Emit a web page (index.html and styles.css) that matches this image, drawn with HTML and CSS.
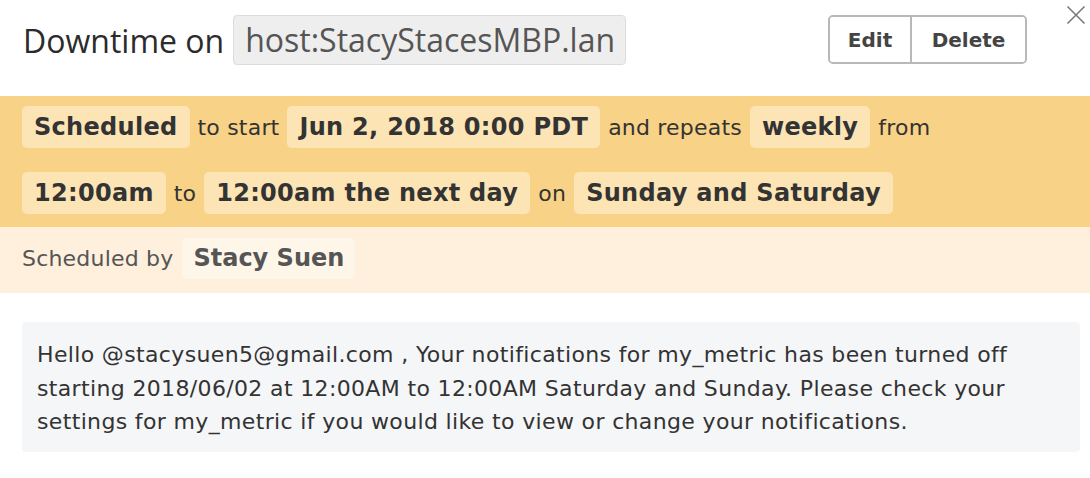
FILE: index.html
```html
<!DOCTYPE html>
<html>
<head>
<meta charset="utf-8">
<link rel="stylesheet" href="styles.css">
</head>
<body>
<div class="modal">
  <div class="header">
    <div class="title">
      <span class="title-text">Downtime on</span>
      <span class="host">host:StacyStacesMBP.lan</span>
    </div>
    <div class="btn-group">
      <button class="btn btn-edit">Edit</button>
      <button class="btn btn-delete">Delete</button>
    </div>
  </div>
  <button class="close" aria-label="Close">
    <svg width="20" height="20" viewBox="0 0 20 20"><path d="M1.5 1.5 L18.5 18.5 M18.5 1.5 L1.5 18.5" stroke="#7a7a7a" stroke-width="1.6" fill="none"/></svg>
  </button>
  <div class="schedule">
    <div class="row">
      <span class="pill">Scheduled</span><span class="word">to start</span><span class="pill">Jun 2, 2018 0:00 PDT</span><span class="word">and repeats</span><span class="pill">weekly</span><span class="word">from</span>
    </div>
    <div class="row">
      <span class="pill">12:00am</span><span class="word">to</span><span class="pill">12:00am the next day</span><span class="word">on</span><span class="pill">Sunday and Saturday</span>
    </div>
  </div>
  <div class="byline">
    <span class="by-label">Scheduled by</span><span class="pill pill-light">Stacy Suen</span>
  </div>
  <div class="message">Hello @stacysuen5@gmail.com , Your notifications for my_metric has been turned off starting 2018/06/02 at 12:00AM to 12:00AM Saturday and Sunday. Please check your settings for my_metric if you would like to view or change your notifications.</div>
</div>
</body>
</html>
```

FILE: styles.css
```css
* { box-sizing: border-box; }
html, body { margin: 0; padding: 0; background: #fff; }
body {
  width: 1090px;
  height: 478px;
  overflow: hidden;
  font-family: "DejaVu Sans", Verdana, sans-serif;
  color: #333;
}
.modal { position: relative; }
.header {
  height: 96px;
  display: flex;
  justify-content: space-between;
  align-items: flex-start;
  padding: 15px 63px 0 23px;
}
.title {
  display: flex;
  align-items: center;
  gap: 9px;
  font-family: "Open Sans", sans-serif;
  font-size: 32px;
}
.title-text { color: #2b2b2b; }
.host {
  display: inline-block;
  height: 50px;
  line-height: 48px;
  padding: 0 10px 0 11px;
  background: #eeeeee;
  border: 1px solid #dcdcdc;
  border-radius: 4px;
  color: #555;
}
.btn-group {
  display: flex;
  height: 49px;
  border: 2px solid #b8b8b8;
  border-radius: 5px;
  overflow: hidden;
}
.btn {
  font-family: "DejaVu Sans", sans-serif;
  font-weight: bold;
  font-size: 20px;
  color: #444;
  background: #fff;
  border: none;
  margin: 0;
  padding: 0;
  height: 45px;
}
.btn-edit { width: 82px; border-right: 2px solid #b8b8b8; }
.btn-delete { width: 113px; }
.close {
  position: absolute;
  top: 5px;
  right: 4px;
  width: 20px;
  height: 20px;
  padding: 0;
  border: none;
  background: none;
}
.close svg { display: block; }
.schedule {
  background: #f8d287;
  padding: 10px 22px 13px;
  display: flex;
  flex-direction: column;
  gap: 24px;
}
.row {
  display: flex;
  align-items: center;
  gap: 8px;
}
.pill {
  display: inline-block;
  height: 42px;
  line-height: 42px;
  padding: 0 12px;
  background: #fce4b5;
  border-radius: 5px;
  font-weight: bold;
  font-size: 24px;
  letter-spacing: 0.3px;
  color: #333;
}
.word {
  font-size: 22px;
  letter-spacing: 0.2px;
  color: #333;
}
.byline {
  background: #fef0dc;
  height: 66px;
  padding: 11px 22px 0;
  display: flex;
  align-items: flex-start;
  gap: 9px;
}
.by-label {
  font-size: 22px;
  letter-spacing: 0.2px;
  color: #555;
  line-height: 41px;
}
.pill-light {
  background: #fff6ea;
  height: 41px;
  line-height: 41px;
  padding: 0 11px;
  letter-spacing: 0;
  color: #555;
}
.message {
  margin: 29px 10px 0 22px;
  background: #f5f6f8;
  border-radius: 4px;
  padding: 16px 15px 13px;
  font-size: 22px;
  letter-spacing: 0.35px;
  line-height: 33.5px;
  color: #333;
}
```
